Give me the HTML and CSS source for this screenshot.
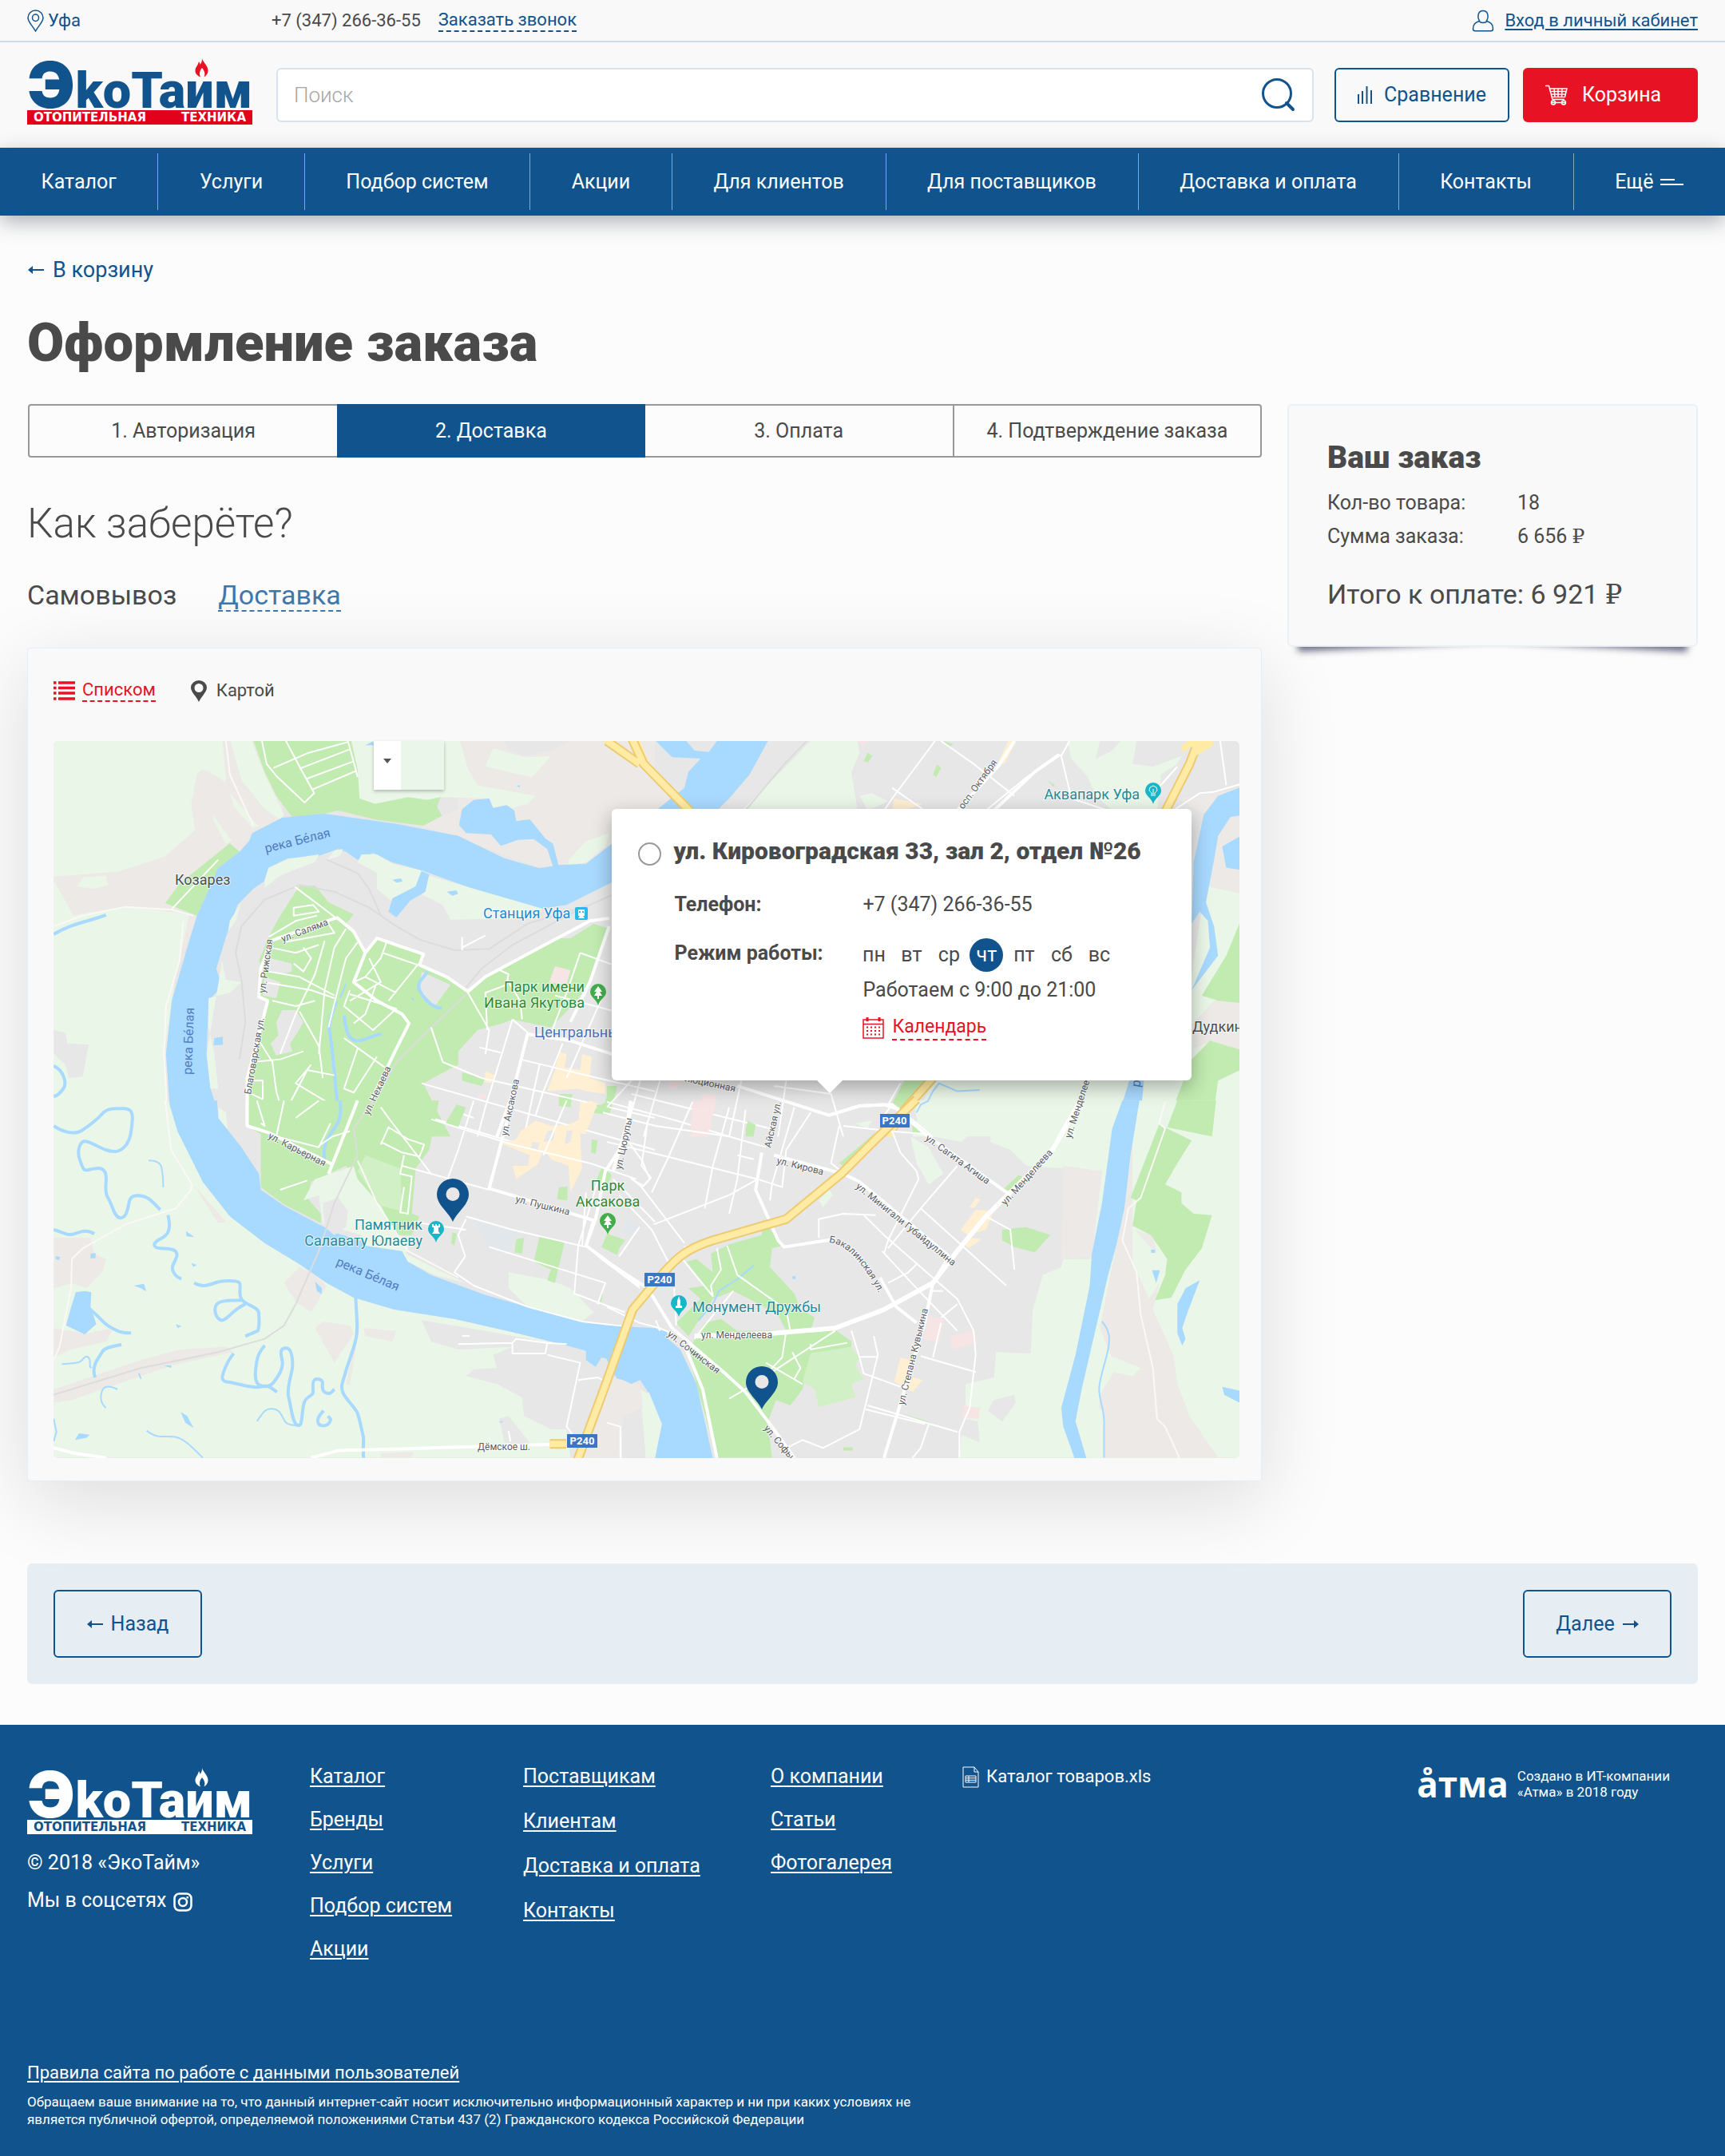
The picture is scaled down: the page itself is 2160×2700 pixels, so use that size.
FILE: index.html
```html
<!DOCTYPE html>
<html lang="ru">
<head>
<meta charset="utf-8">
<meta name="viewport" content="width=device-width, initial-scale=1">
<title>Оформление заказа — ЭкоТайм</title>
<link rel="stylesheet" href="styles.css">
</head>
<body>
<header class="header">
  <div class="topbar">
    <a class="topbar-city" href="#"><svg class="icon" width="21" height="28" viewBox="0 0 21 28"><path d="M10.500 27C7 20.500 1 15.500 1 10.200a9.500 9.200 0 0 1 19 0C20 15.500 14 20.500 10.500 27Z"/><ellipse cx="10.500" cy="10.200" rx="4" ry="4.200"/></svg>Уфа</a>
    <a class="topbar-phone" href="tel:+73472663655">+7 (347) 266-36-55</a>
    <a class="topbar-call dashed" href="#">Заказать звонок</a>
    <a class="topbar-login" href="#"><svg class="icon" width="28" height="28" viewBox="0 0 28 28"><path d="M10 14.500C7 11 6.500 1.500 14 1.500S21 11 18 14.500"/><path d="M9 14.500C4 16.500 1.500 18.500 1.500 24c0 2 .8 2.800 2.500 2.800h20c1.700 0 2.500-.8 2.500-2.800 0-5.500-2.500-7.500-7.500-9.500-2 2.800-8 2.800-10 0Z"/></svg><span>Вход в личный кабинет</span></a>
  </div>
  <div class="header-main">
    <a class="logo" href="#" aria-label="ЭкоТайм, отопительная техника">
      <span class="logo-name"><span class="logo-first">Э</span>kоТаим<svg class="logo-flame" width="20" height="24" viewBox="0 0 20 24"><path d="M11 0c1 5 8 10 7.500 16-.3 3.500-2.500 6-5 7.500 2-4 .5-8-2.500-11.500-3 3.500-4 7.500-2 11.500-3.500-1.500-6.500-4-6.500-8C2.500 11 6 9 7 4c1 1.500 1.500 2.500 1.500 4C10 6 11.300 3.500 11 0Z"/></svg></span>
      <span class="logo-tagline"><span>ОТОПИТЕЛЬНАЯ</span><span>ТЕХНИКА</span></span>
    </a>
    <form class="search">
      <input class="search-input" type="search" placeholder="Поиск" aria-label="Поиск">
      <button class="search-button" type="button" aria-label="Найти"><svg class="icon" width="42" height="42" viewBox="0 0 42 42"><circle cx="19" cy="19" r="17.500" stroke-width="3"/><path d="m31 31 8 8" stroke-width="4" stroke-linecap="round"/></svg></button>
    </form>
    <div class="header-buttons">
      <button class="button button-compare" type="button"><svg class="icon" width="20" height="22" viewBox="0 0 20 22"><path d="M2 10v12M7 6v16M12.500 0v22M18 5v17" stroke-width="2"/></svg>Сравнение</button>
      <button class="button button-cart" type="button"><svg class="icon" width="28" height="26" viewBox="0 0 28 26"><path d="M0 1.500h4.500L9 18.500h15M5.500 5H27l-2.500 10.500H8.500M7 8.500h19M7.500 12h18M11 5l1 10.500M16 5v10.500M21 5l-.5 10.500M8 22.500h17" stroke-width="1.500"/><circle cx="10" cy="22.500" r="2.500"/><circle cx="23" cy="22.500" r="2.500"/></svg>Корзина</button>
    </div>
  </div>
  <nav class="nav">
    <ul class="nav-list">
      <li><a href="#">Каталог</a></li>
      <li><a href="#">Услуги</a></li>
      <li><a href="#">Подбор систем</a></li>
      <li><a href="#">Акции</a></li>
      <li><a href="#">Для клиентов</a></li>
      <li><a href="#">Для поставщиков</a></li>
      <li><a href="#">Доставка и оплата</a></li>
      <li><a href="#">Контакты</a></li>
      <li><a href="#">Ещё <svg class="icon" width="29" height="10" viewBox="0 0 29 10"><path d="M0 2h18M0 8h29" stroke-width="2"/></svg></a></li>
    </ul>
  </nav>
</header>

<main class="page">
  <a class="back-link" href="#"><svg class="icon arrow" width="20" height="12" viewBox="0 0 20 12"><path d="M3 6h17" stroke-width="2"/><path class="solid" d="M0 6 6 1v10Z"/></svg>В корзину</a>
  <h1 class="title">Оформление заказа</h1>

  <div class="columns">
    <section class="checkout">
      <ol class="steps">
        <li>1. Авторизация</li>
        <li class="current" aria-current="step">2. Доставка</li>
        <li>3. Оплата</li>
        <li>4. Подтверждение заказа</li>
      </ol>
      <h2 class="question">Как заберёте?</h2>
      <div class="tabs">
        <button class="tab" type="button">Самовывоз</button>
        <button class="tab tab-link dashed" type="button">Доставка</button>
      </div>

      <div class="panel">
        <div class="views">
          <button class="view view-list" type="button"><svg class="icon" width="27" height="24" viewBox="0 0 27 24"><path d="M0 2h3.500M6 2h21M0 8.500h3.500M6 8.500h21M0 15h3.500M6 15h21M0 22h3.500M6 22h21" stroke-width="3.500"/></svg><span class="dashed">Списком</span></button>
          <button class="view" type="button"><svg class="icon" width="20" height="27" viewBox="0 0 20 27"><path class="solid" fill-rule="evenodd" d="M10 27C7 20 0 15 0 9a10 9 0 0 1 20 0c0 6-7 11-10 18ZM10 4a5.500 5.500 0 1 0 0 11 5.500 5.500 0 1 0 0-11Z"/></svg><span>Картой</span></button>
        </div>

        <div class="map">
          <svg class="map-canvas" viewBox="0 0 1485 898" role="img" aria-label="Карта Уфы с пунктами самовывоза">
            <rect class="urban" width="1485" height="898"/>

            <!-- north-west -->
            <g transform="translate(-7 -8) scale(.4847 .3333)">
              <path class="bare" d="M0 0H610L605 320 528 370 495 440 440 500 410 600 385 680 330 900 300 1500H0Z"/>
              <path class="field" d="M0 0H450L460 180 430 150 400 130 385 150 370 260 380 360 300 460 180 515 0 535ZM470 20H525L560 150 610 300 600 320 560 280 500 170ZM470 220 545 345 530 352 480 270ZM0 540 20 560 70 690 0 710ZM90 535 150 530 155 565 120 580 75 570ZM0 710 80 675 200 645 340 670 365 680 330 900 300 1200 310 1500H0ZM425 300 475 400 460 410 430 330Z"/>
              <path class="bare" d="M1040 0H1568V430L1400 500H1270L1040 380 960 340 1018 305 1060 280Z"/>
              <path class="urban" d="M1180 24H1350L1300 60 1230 80 1190 55ZM15 1110 45 1120 50 1160 105 1165 90 1285 55 1290 45 1240 15 1200Z"/>
              <path class="field" d="M780 0H1060L1085 130 1110 190 1260 230 1240 260 1190 280 1150 275 1140 240 1015 235 980 245 930 235 845 260 805 240ZM1500 240 1568 190V290H1460ZM1345 470 1390 400 1450 370 1440 420 1390 480 1345 490ZM1150 50 1230 85 1300 80 1250 160 1130 120Z"/>
              <path class="park" d="M525 0H780L800 130 805 240 845 260 930 235 980 245 1015 235 1005 270 1018 305 970 342 850 320 750 285 690 305 630 308 590 230 560 140ZM470 408 495 440 440 500 410 600 385 680 303 633 340 560Z"/>
              <path class="water" d="M1568 330 1457 410 1390 485 1320 490 1270 502 1180 465 1060 380 900 335 715 297 605 312 528 370 520 400 495 440 440 500 410 600 385 680 360 800 320 1000 305 1200 315 1400 335 1510H445L440 1420 420 1330 410 1200 415 1000 450 945 435 880 460 760 490 640 530 580 560 550 570 500 620 465 700 455 750 430 770 440 800 470 840 445 890 480 970 512 1080 570 1180 625 1270 655 1340 640 1457 555 1568 480Z"/>
              <path class="field" d="M560 545 570 500 620 467 700 450 690 480 650 500 600 530 560 575ZM722 470 740 435 762 430 755 455ZM810 450 850 450 890 485 970 512 960 580 900 640 850 580 850 520 800 480ZM985 530 1280 655 1240 690 1040 695 1020 640 965 600ZM500 630 485 700 465 740 470 700ZM450 850 460 920 500 930 470 970 415 990 415 1100 430 1200 440 1330 420 1330 410 1200ZM440 1400 460 1420 465 1500 440 1500Z"/>
              <path class="water" d="M965 512 985 525 975 590 935 625 900 687 880 665 890 615 950 570ZM1070 280 1100 245 1140 240 1150 275 1185 265 1205 285 1210 325 1245 318 1285 390 1305 410 1320 495H1305L1290 430 1255 392 1215 395 1170 418 1145 375 1080 370 1062 340ZM890 545 912 540 916 552 900 556ZM1030 590 1055 585 1060 598 1045 605ZM820 40 840 25 842 40ZM430 1140 452 1135 452 1165 428 1168ZM1210 192 1220 190 1218 198Z"/>
              <path class="park" d="M650 568H690L725 630 790 675 770 710 800 760 820 820 850 765 970 830 965 870 1060 935 1085 965 1160 880 1290 790 1320 765 1350 765 1410 710 1450 730 1400 930 1360 1010 1300 1100 1200 1070 1130 1110 1060 1240 970 1310 1000 1400 1040 1510H560L515 1470V1330L545 1160 565 1000 540 985 560 900 545 850 570 760 600 680Z"/>
              <path class="urban" d="M605 1035H640L660 1080 640 1130 625 1160 632 1190 590 1205 575 1160 595 1130 590 1080ZM575 840 630 860V890L600 900 560 880ZM560 910 600 930 590 990 555 980ZM965 890 1040 940 1000 1020 960 960ZM1200 1075 1300 1100 1280 1300 1060 1260 1060 1190 1110 1110ZM1030 1320 1060 1390 1050 1440 1080 1510H1040Z"/>
              <path class="clinic" d="M1310 870 1350 885 1340 940 1295 930ZM1110 1355 1130 1350 1130 1370 1110 1372Z"/>
              <path class="park" d="M1070 1270 1130 1290 1120 1320 1070 1300ZM1320 1350 1355 1350 1350 1400 1320 1395ZM1450 1320 1470 1330 1450 1430 1405 1420 1440 1380Z"/>
              <path class="centre" d="M1320 1190 1340 1200 1335 1250 1375 1260 1380 1200 1405 1210 1400 1290 1440 1310 1440 1350 1390 1340 1370 1330 1290 1340 1310 1260ZM1375 1380H1400L1390 1500H1250L1260 1450 1300 1470 1370 1460ZM1130 1265 1155 1280 1145 1310 1128 1305Z"/>
              <path class="stream wide" d="M745 1000C738 1040 722 1080 728 1120S742 1300 745 1350 755 1450 755 1510"/>
              <path class="stream wide" d="M765 1055C770 1110 775 1150 800 1150S830 1130 862 1125"/>
              <path class="stream wide" d="M980 890C975 910 950 930 960 960S990 1025 1018 1028"/>
              <path class="stream wide" d="M15 750C60 710 110 700 150 678M15 1245C40 1260 50 1310 40 1330S25 1355 15 1360"/>
              <path class="stream wide" d="M15 1470C40 1500 80 1495 100 1485S140 1440 160 1425 185 1400 200 1405 220 1410 220 1440V1510"/>
              <path class="stream" d="M770 935 755 990M940 990 945 998"/>
              <path class="rail" d="M495 1220 510 1080 500 920 485 820 500 720 560 620 650 565 740 590 830 650 900 720 960 770 1050 810 1140 805 1240 710 1400 640 1568 530M720 470 800 520 830 580 860 680M1080 950 1120 880 1200 790 1380 650M810 1510 840 1390 900 1230 990 1100 1085 970"/>
              <path class="road" d="M553 24 565 110 590 155 663 255 688 220 650 120 615 24M583 125 670 70 775 28M650 128 780 55M670 165 790 100M685 205 798 135M320 655 440 470M775 24 795 130 800 160"/>
              <path class="road" d="M638 572 700 640 745 690M635 650 685 640 700 665 635 680ZM570 760 640 700 695 680M610 780 740 745 720 700M575 800 640 820 700 790M660 800 680 840 660 890 635 860M715 775 690 900 640 1050 600 1200M770 730 740 800 715 960 700 1200M800 780 770 840 745 980 725 1100M570 890 650 910 740 980M560 930 680 960 740 990"/>
              <path class="road" d="M875 780 860 840 820 910 790 930M865 820 955 865 880 1000M820 910 900 970M830 840 860 930 780 1000M780 960 765 1020 840 1110 900 1030 780 975M850 930 820 1050 790 1085M545 1150 580 1230 590 1340 610 1440 600 1510M530 1230 600 1220 660 1190M650 1040 700 1170 710 1290M680 1240 640 1310 720 1380 710 1510M740 1280 670 1260 580 1510M765 1140 870 1250M800 1180 765 1330 790 1345 850 1210M525 1300H555V1370M525 1350 555 1370M580 1000 640 1020 690 1000"/>
              <path class="road" d="M1160 880 1190 900 1185 940 1130 970 1135 1110M1190 930 1220 1000 1225 1070M1375 820 1450 860 1568 910M1375 820 1340 970 1300 1120M1310 980 1568 1080M1085 970 1140 1110 1130 1200M990 1100 1020 1230 1120 1290 1568 1440M965 1310 1568 1560M1200 1070 1160 1260 1130 1400 1110 1510M1270 1240 1230 1510M1440 960 1340 1290M1220 1220 1420 1290 1568 1340M1240 1120 1200 1070M1115 1175 1170 1195M900 1380 930 1470 920 1510M1530 1300 1490 1510M1568 1240 1450 1200M1330 1160 1280 1340 1260 1430M1100 1440 1060 1420M990 1440 1200 1530M1070 760V810M1070 800 1130 755"/>
              <path class="road main" d="M575 780 550 880 545 985 568 1000 550 1100 515 1290V1465L570 1495M745 685 790 740 820 820 790 930 850 1000 915 1050 933 1085 900 1180 790 1510M820 820 850 765 970 825 960 865 1030 910 1085 965 1130 910 1270 800 1400 700 1450 690M1450 720 1400 930 1350 1080M1240 1120 1200 1350 1160 1510M1240 1125 1350 1150 1457 1200M575 775 745 688"/>
              <path class="road faint" d="M15 720 90 680 200 647 320 658 375 680M350 700 340 850 305 1020 300 1200 312 1500M460 24 470 150 530 340"/>
              <path class="highway" d="M1440 20 1530 95 1568 150M1520 20 1545 110 1568 160M1500 20C1500 55 1480 45 1475 24"/>
            </g>

            <!-- south-west -->
            <g transform="translate(-7 452) scale(.4847 .3333)">
              <path class="field" d="M0 0H312L335 110 400 300 470 430 560 530 650 610 720 680 790 735 895 780 1050 815 1200 865 1340 915 1390 935 1430 960V1337H0Z"/>
              <path class="bare" d="M15 510 110 510 120 570 150 590 140 640 100 700 60 680 15 700ZM15 850 100 870 170 850 150 900 60 930 15 960ZM15 1080 240 970 340 930 460 920 480 940 320 990 60 1120 15 1130ZM610 680 650 620 680 640 720 690 680 790 640 750ZM690 850 710 825 780 840 790 870 740 980ZM815 850 900 860 890 900 820 880ZM375 310 460 450 440 455ZM810 790 780 1065 770 1060ZM860 1320 945 1315 940 1337H860Z"/>
              <path class="urban" d="M965 820 1130 860 1340 915 1390 935 1500 960 1530 1080 1540 1337H1350L1340 1230 1300 1230 1230 1180 1225 1110 1160 1060 1080 1030 1100 1005 1160 1000 1150 950 1200 920 1060 930 990 900ZM1165 1190 1190 1180 1250 1290 1180 1280Z"/>
              <path class="water" d="M315-5 335 110 400 300 470 430 560 530 650 610 720 680 790 735 895 780 1050 815 1200 865 1340 915 1390 935V970L1415 995 1430 960 1460 970 1470 1045 1500 1060 1530 1045 1550 1090 1600 1100V860L1530 848 1380 825 1240 770 1130 725 990 650 930 600 915 560 860 545 750 495 700 460 610 390 550 330 545 270 500 170 440 60 437-5Z"/>
              <path class="park" d="M515-5H1010L985 180 950 250 940 420 960 430 940 500 900 500 800 290 770 240 680 300 670 360 705 420 705 455 610 385 550 320 550 100 515 90Z"/>
              <path class="park light" d="M820 200 910 250 915 410 860 390 800 260Z"/>
              <path class="field" d="M790 240 800 290 860 390 900 500 940 510 925 570 1020 640 1080 680 1000 650 930 600 915 560 820 540 810 500 710 460 700 350 660 370 690 290ZM1190 640 1300 670 1350 700 1410 790 1380 825 1240 770 1190 700ZM1530 1080 1568 1110V1337H1545Z"/>
              <path class="urban" d="M710 380 750 360 775 410 770 470 740 500 715 470Z"/>
              <path class="park" d="M1055 10 1080 20 1060 95 1025 85ZM1320 320 1342 318V370L1315 365ZM1210 515 1230 510 1225 570 1205 565ZM1270 505 1335 525 1310 680 1290 670 1300 630 1255 600ZM1045 490 1056 495 1050 540 1042 530ZM1430 250 1455 270 1440 310 1415 300ZM1445 495 1485 515 1470 575 1430 545ZM1405 140 1420 145 1415 195 1403 190ZM1320-5H1345L1330 20ZM1410 10H1450L1445 50ZM1435 700 1430 750 1424 748Z"/>
              <path class="centre" d="M1240 90 1260 70 1300 100 1340 90 1380 60 1375 20 1400-5 1420 5 1395 100 1375 120 1380 250 1350 340 1345 240 1300 215 1280 180 1265 235 1210 290 1200 240 1240 240 1245 200 1170 155 1210 140 1220 110Z"/>
              <path class="urban" d="M1290 110 1310 105 1305 145 1280 150ZM1250 150 1270 155 1265 180 1248 175ZM1340 110 1355 105 1350 150 1335 160Z"/>
              <path class="plot" d="M1100 440 1220 480 1190 570 1140 550ZM1500 440 1530 470 1500 500 1480 480Z"/>
              <path class="water" d="M95 710 112 715 110 770 125 835 95 873 47 840 60 770 72 715ZM690 675 708 700 707 722 695 710ZM357 485 378 508 358 505ZM222 690 248 683 254 712 240 700ZM80 1245 108 1250 100 1262 70 1270ZM370 605 384 612 376 620ZM330 835 345 842 335 850ZM343 1165 360 1180 376 1225 355 1205ZM110 570 123 568V587H110ZM20 580 32 582 28 594 20 590ZM300 990 320 990 318 1000ZM1164 1200 1176 1199 1172 1206Z"/>
              <path class="stream wide" d="M755-5C760 60 750 80 735 110S710 160 715 220M795 735C797 790 800 830 798 870S780 960 770 1010 755 1070 763 1095 795 1150 800 1170 812 1240 815 1260V1337"/>
              <path class="stream wide" d="M15 90C40 115 70 125 90 105S125 70 140 45 175 25 195 25 220 40 218 70 215 140 200 165 170 190 150 180 100 140 90 150 75 190 83 220 90 260 105 255 140 240 148 265 142 330 155 360 170 430 185 435 205 410 208 390 210 350 235 352 270 375 290 405M310 425C320 480 310 500 290 515S270 548 290 550 330 550 333 570 318 610 322 630 335 660 345 665M15 480C40 490 50 505 70 495S100 480 120 495M378 680C400 700 420 685 435 678S490 668 495 680 490 725 502 745 545 770 545 795 548 840 542 860L510 880M500 745C470 745 440 745 434 765S435 815 448 820 480 775 510 760M105 775C130 800 140 830 160 845S185 868 215 868M190 912C160 920 145 925 140 940S110 990 122 1035"/>
              <path class="stream wide" d="M560 915C540 950 540 970 538 990S532 1050 545 1062 575 1070 585 1050 610 1000 605 970 600 925 615 925 632 960 632 990 615 1070 622 1110 632 1210 645 1215 655 1180 660 1140 685 1110 685 1090 680 1035 700 1042 700 1075 715 1090 735 1085 740 1080M480 945C465 970 460 990 455 1010S445 1050 465 1052 530 1080 550 1070 580 1080 592 1090M712 1160C700 1180 695 1190 698 1205S720 1220 727 1205 728 1190 724 1180"/>
              <path class="stream" d="M260 220C280 220 292 230 294 250S298 280 298 320M36 985C60 980 80 985 88 970S105 950 108 970 105 990 112 1000M180 1080C160 1065 145 1065 140 1085S135 1130 150 1150M255 1235C280 1265 300 1255 325 1258S375 1300 400 1337M540 1200C555 1170 560 1150 580 1153S605 1180 610 1195 625 1215 640 1215M235 1020 240 1040M15 1190 22 1240 15 1275"/>
              <path class="rail" d="M15 1100 240 1000 440 940 560 890 610 840 640 760 700 560 740 380 800 200 790 100 840-5"/>
              <path class="road" d="M860 20 880 60 990 270M860 160 880 95 930 140 972 160 960 205 915 190 860 150M920 200 910 270 940 280 930 420 910 415 920 320M600 330 670 295M700 165 735 130 780 110M990 65 1200 160 1400 230 1520 290M915 240 1140 330M1080 430 1200 480 1390 545M1080 440 1060 500 1078 580 1050 640 1100 690 1240 770 1380 825 1500 845M1140 545 1440 680 1420 760M1100-5 1060 180 1030 300M1420 300 1370 540 1360 720 1490 790M1390 340 1380 545M1395 545 1430 590 1530 700M1340-5 1280 200M1460 290 1568 450M1500 150 1535 220 1555 290 1535 320 1505 285M940 450 1080 480M540-5 560 90 550 80M610-5 590 130 700 170 730 80M700-5 640 60"/>
              <path class="road main" d="M515-5V90L570 115 735 235 800-5M735 235 725 270M1200-5 1140 325 1210 355 1410 445 1390 540 1530 690M1505-5 1490 150 1440 260 1415 440 1390 540M15 1300 70 1320 150 1337M680 1337 750 1310 1110 1295 1340 1285"/>
              <path class="road" d="M1060 910 1200 905 1210 890 1290 905 1285 945 1200 945V905M1290 905 1340 910M1290 950 1375 980 1340 1220 1360 1260M1370 1045 1420 1035 1480 1080V1337M1420 1205 1480 1220M1190 1237 1195 1275M1070 878 1090 880"/>
              <path class="road faint" d="M303-5 318 180 372 310 370 330 330 400 200 460 90 550 62 590 60 700 30 920 15 970M800 220 850 380 930 560 1060 660"/>
            </g>

            <!-- north-east -->
            <g transform="translate(693 -8) scale(.5102 .3333)">
              <path class="bare" d="M0 24H60L190 285H0Z"/>
              <path class="field" d="M500 24H615L620 70 600 140 615 285H330L400 180ZM1130 24H1210L1200 90 1240 60 1260 24H1300L1290 110 1340 120 1410 80 1400 110 1360 150 1350 285H1240L1200 230 1180 160 1140 90ZM620 230 650 220 690 250 640 285ZM1470 560 1568 600V1510H1180L1430 950Z"/>
              <path class="field" d="M800 1300H1435L1420 1510H750L770 1400Z"/>
              <path class="bare" d="M1400 240 1568 200V600L1470 570V300ZM1490 1000H1568V1190L1480 1155 1440 1180 1435 1090Z"/>
              <path class="park" d="M630 100 640 68 652 80 640 105ZM800 150 810 112 820 125 808 160ZM1080 170 1100 190 1095 195ZM1568 650 1520 830 1460 980 1500 1000 1568 1010ZM1480 1150 1568 1190V1250L1500 1300 1480 1510H1365L1390 1400 1435 1220ZM730 1300H800L730 1410 700 1385ZM825 24 850 35 840 45ZM0 1320 25 1320 10 1370 0 1360ZM345 1450 365 1465 360 1510H340Z"/>
              <path class="clinic" d="M612 24H645L628 40ZM235 1350 268 1355 250 1510H205ZM155 1300H180L170 1335 150 1330Z"/>
              <path class="centre" d="M985 24H1005L975 110 960 105ZM705 240 775 260 740 280 700 285Z"/>
              <path class="water" d="M120 24H395L350 150 300 240 270 285H120L190 200 200 140 230 90 160 85ZM1568 190 1500 230 1465 300 1440 480 1435 710 1455 665 1475 700 1480 800 1435 960 1500 830 1490 720 1470 630 1490 470 1500 380 1530 310 1568 300ZM1568 370 1510 420 1520 500 1568 510ZM1282 1300H1318L1305 1510H1240Z"/>
              <path class="urban" d="M195 24H270L250 65 215 60Z"/>
              <path class="stream" d="M780 1400 800 1340 815 1310 860 1340 915 1335"/>
              <path class="rail" d="M490 24 430 120 340 285"/>
              <path class="road" d="M805 24 700 240 680 285M820 24 900 110 1000 230M700 200 775 280M1115 75 1030 160 930 285M1135 24 1115 80 1140 240 1230 285M1330 240 1400 120M1505 24 1520 190M1390 285 1455 220 1490 215 1568 180M0 1400 60 1300M130 1300 90 1510M440 1300 420 1510M330 1300 300 1510M0 1380 170 1450 300 1510M60 1350 400 1480M410 1320 550 1350 580 1510M690 1390 720 1310M720 1410 800 1510M700 1390 670 1450"/>
              <path class="road main" d="M1000 24 960 120 850 300M1110 75 1050 140 950 285M320 1320 545 1430 620 1395 680 1390 720 1410"/>
              <path class="highway-edge" d="M60 10 90 110 205 290M0 24 80 110M1455 10 1430 110 1370 290M800 1290 730 1410 700 1480"/>
              <path class="highway" d="M60 10 90 110 205 290M0 24 80 110M1455 10 1430 110 1370 290M1420 60C1410 30 1450 30 1480 35L1440 70M800 1290 730 1410 690 1510"/>
            </g>

            <!-- south-east -->
            <g transform="translate(693 452) scale(.5102 .3333)">
              <path class="field" d="M755-5H1568V1337H865L870 1250 915 1280 910 1200 880 1190 880 1060 950 1035 955 940 1040 945 1045 780 1070 650 1115 620 1120 590H1185L1215 260 1030 240 990 180 940 150 945 110 915 85 870 150 800 130 760 60ZM610 80 650 70 640 100ZM745 130 790 170 825 270 790 310 760 230ZM545 330 555 350 530 395 520 370Z"/>
              <path class="bare" d="M1120 240 1215 260 1190 585 1115 590ZM1290 120V480L1340 500 1360 650 1340 780 1390 950 1400 1060 1430 1180 1500 1337H1200L1210 1100 1250 1000 1210 850 1235 650 1270 400ZM0 1030 80 1060 90 1150 40 1180 30 1337H-70Z"/>
              <path class="field" d="M1290 470 1360 590 1370 650 1330 740 1290 600ZM1230 950 1310 1000 1290 1030 1230 1010ZM1180 1130 1220 1160V1337H1177ZM85 1090 130 1100 135 1210 118 1337H95Z"/>
              <path class="urban" d="M950 1120 1000 1100 1003 1130 970 1200 935 1160Z"/>
              <path class="park" d="M1355 85 1435 145 1400 230 1370 310 1410 340V380L1440 420 1485 425 1460 550 1420 630 1385 735 1345 745 1370 650 1375 590 1335 500 1290 465 1300 370 1285 360ZM1400-5H1495L1485 130 1375 95ZM970 480 1030 470 1088 500 1050 565 1000 545 970 520ZM1010 275 1025 285 990 340 975 325ZM345 75 365 85 358 117 340 110ZM750 75 785 125 750 115ZM715 1165 795 1205 790 1208ZM580 1298H603V1310H580ZM0 500 45 520 20 570 0 545ZM0 265 12 275 0 320Z"/>
              <path class="park" d="M300 535 380 500 385 440 410 500 430 540 405 550 400 620 460 720 475 780 510 810 500 860H440L420 800 350 740 310 710 260 740 200 880 170 830 230 740 200 700 240 690 195 600 220 590 260 640 255 570ZM215 890 240 830 280 815 320 860 560 855 600 900V920L500 945 480 1080 450 1140 415 1120 395 1200 400 1270 405 1337H270L200 950ZM640 140 660 110 590 250 570 230Z"/>
              <path class="park light" d="M500 945 600 920 620 960 610 990 630 1040 600 1060 610 1110 520 1145 510 1080 480 1050Z"/>
              <path class="clinic" d="M790 805 828 815 815 905 775 890ZM845 880 900 855 898 910 845 930ZM875 1140 915 1150 912 1190 872 1188ZM210-5H270L245 133 205 110Z"/>
              <path class="centre" d="M905 360 918 365 900 400 890 395ZM905 405 950 410 930 480 885 500 868 480ZM890 510 920 515 890 548 880 540ZM720 960 745 970 740 1030 775 1045 750 1090 705 1050Z"/>
              <path class="water" d="M1265-5 1240 100 1215 380 1190 570 1185 690 1150 950 1115 1150 1120 1220 1148 1340H1177L1150 1200 1165 1080 1200 850 1230 650 1250 540 1270 400 1285 200 1307-5ZM-10 840 120 850 180 930 220 1060 260 1340H118L135 1210 95 1060 85 1040 60 1060 20 1030 0 970ZM1455 670 1425 790 1412 850 1420 890 1412 915 1400 870 1400 760 1420 700ZM1510 1070 1553 1085V1130L1515 1100ZM1338 632H1357L1348 680ZM1335 555H1345V567H1336ZM455 655H463V665H456Z"/>
              <path class="stream" d="M760 40 770 10 790-5M360 615 325 660 275 710 260 760 225 820M1215 825C1235 860 1235 890 1230 930S1208 1040 1208 1080 1220 1150 1220 1200V1337"/>
              <path class="road" d="M-10 40 120 90 300 130M0 150 160 210 370 290M100 70 85 240 108 285 90 315 60 290M210 0 150 210 110 340M300 20 260 240 240 400M340 30 320 290 300 420M460 20 405 310 400 370M300 130 390 170M320 200 360 215M370 290 300 350 115 460M500 40 440 180 430 320 370 290M570 90 550 230 575 260M700 110 720 190 760 260 765 290 690 520 680 570M580 90 700 110 780 120M860 240 770 400 690 550M675 560 760 700 860 860M520 510V440L580 420 660 425M630 425 680 500 770 620 860 740 900 860 905 950 890 1150 865 1240V1337M770 400 850 510 980 690M690 680 740 640 760 610M930 430 990 480 1000 630"/>
              <path class="road" d="M180 580 260 730 255 690 280 630 270 550M295 540 320 650 440 780 450 860M310 710 240 840M440 860 430 960 380 1040 560 860M390 980 480 1060M455 940 475 1000 460 1040M500 910V930L590 905M600 860 620 960 630 1020 720 1070M655 880 665 950 620 1230 530 1300 480 1270 440 1300M620 958H665M640 1140 860 1240M635 1155 780 1210M790 1210 770 1300 750 1337M770 955 905 1015M820 830 800 960M860 760 820 810M800 710H825M300 1115 350 1070M0 600 90 690M30 350 110 480 150 600M80 310 190 530M80 470 30 580M0 770 80 830 130 850 160 870M120 820 130 860M165 700 170 840M240 840 215 890M0 1205 33 1220V1337"/>
              <path class="road main" d="M-10 590 100 700 160 850 290 1020 340 1090 400 1210 460 1337M380 190 365 330 400 450 420 520 435 545 560 515M670 660 710 770 760 830M545 50 620 15 700 10 780 120M410 200 580 270 620 300 840 580M840 580 800 680 780 830 680 1337M780 120 990 350M195 930 235 1080 270 1337M440 430 280 500 190 550M65 0 15 260"/>
              <path class="road avenue" d="M215 880 400 870 560 850 680 780 800 680 860 560 930 430 1090 190 1160 0"/>
              <path class="road faint" d="M1370 0 1355 80 1370 100 1310 360 1280 400 1265 520 1300 640 1310 800 1340 1000 1350 1190 1370 1220 1405 1337"/>
              <path class="highway-edge" d="M760-10 640 170 575 270 440 440 260 520C190 555 170 590 140 640L63 780-10 1090-72 1345M-140 1285H-100"/>
              <path class="highway" d="M760-10 640 170 575 270 440 440 260 520C190 555 170 590 140 640L63 780-10 1090-72 1345M-140 1285H-70"/>
            </g>

            <g class="street">
              <text transform="translate(287 252) rotate(-21)">ул. Саляма</text>
              <text transform="translate(265 316) rotate(-82)">ул. Рижская</text>
              <text transform="translate(247 443) rotate(-80)">Благоварская ул.</text>
              <text transform="translate(395 469) rotate(-65)">ул. Нехаева</text>
              <text transform="translate(568 495) rotate(-78)">ул. Аксакова</text>
              <text transform="translate(268 497) rotate(27)">ул. Карьерная</text>
              <text transform="translate(578 577) rotate(14)">ул. Пушкина</text>
              <text transform="translate(711 537) rotate(-78)">ул. Цюрупы</text>
              <text x="531" y="888">Дёмское ш.</text>
              <text x="811" y="748">ул. Менделеева</text>
              <text transform="translate(768 744) rotate(38)">ул. Сочинская</text>
              <text transform="translate(889 861) rotate(50)">ул. Софьи П</text>
              <text transform="translate(1065 832) rotate(-76)">ул. Степана Кувыкина</text>
              <path id="bakalinskaya" class="guide" d="M971 628Q1003 630 1038 700"/>
              <text><textPath href="#bakalinskaya">Бакалинская ул.</textPath></text>
              <text transform="translate(1004 559) rotate(39)">ул. Минигали Губайдуллина</text>
              <text transform="translate(1091 499) rotate(36)">ул. Сагита Агиша</text>
              <text transform="translate(905 529) rotate(14)">ул. Кирова</text>
              <text transform="translate(898 510) rotate(-77)">Айская ул.</text>
              <text transform="translate(1192 582) rotate(-48)">ул. Менделеева</text>
              <text transform="translate(1274 498) rotate(-72)">ул. Менделеев</text>
              <text transform="translate(790 426) rotate(12)">люционная</text>
              <text transform="translate(1139 86) rotate(-54)">осп. Октября</text>
            </g>
            <g class="river">
              <text transform="translate(266 140) rotate(-14)">река Бе́лая</text>
              <text transform="translate(173 418) rotate(-88)">река Бе́лая</text>
              <text transform="translate(353 656) rotate(23)">река Бе́лая</text>
              <text transform="translate(1360 434) rotate(-80)">р</text>
            </g>
            <g class="place">
              <text x="152" y="180">Козарез</text>
              <text x="1426" y="364">Дудкин</text>
              <text class="station" x="538" y="222">Станция Уфа</text>
              <text class="centre-name" x="602" y="371">Центральнь</text>
              <g class="park-name">
                <text x="665" y="314" text-anchor="end">Парк имени</text>
                <text x="665" y="334" text-anchor="end">Ивана Якутова</text>
                <text x="694" y="563" text-anchor="middle">Парк</text>
                <text x="694" y="583" text-anchor="middle">Аксакова</text>
              </g>
              <g class="sight-name">
                <text x="462" y="612" text-anchor="end">Памятник</text>
                <text x="462" y="632" text-anchor="end">Салавату Юлаеву</text>
                <text x="800" y="715">Монумент Дружбы</text>
                <text x="1360" y="73" text-anchor="end">Аквапарк Уфа</text>
              </g>
            </g>
            <g class="poi">
              <path class="poi-park" d="M682 331c-2-8-10-10-10-17a10 10 0 0 1 20 0c0 7-8 9-10 17ZM694 618c-2-8-10-10-10-17a10 10 0 0 1 20 0c0 7-8 9-10 17Z"/>
              <path class="poi-glyph" d="m682 307 5 7h-3l3 5h-4v4h-2v-4h-4l3-5h-3ZM694 594l5 7h-3l3 5h-4v4h-2v-4h-4l3-5h-3Z"/>
              <path class="poi-sight" d="M479 628c-2-8-10-10-10-17a10 10 0 0 1 20 0c0 7-8 9-10 17ZM783 721c-2-8-10-10-10-17a10 10 0 0 1 20 0c0 7-8 9-10 17ZM1377 79c-2-8-10-10-10-17a10 10 0 0 1 20 0c0 7-8 9-10 17Z"/>
              <path class="poi-glyph" d="M474 605h2v2h2v-2h2v2h2v-2h2v4h-2v5l2 3h-10l2-3v-5h-2ZM781 701l2-6 2 6v6h2v3h-8v-3h2Z"/>
              <path class="poi-ring" d="M1375 69v-4l-3-3 1-4 4-2 4 2 1 4-3 3v4M1377 60v9"/>
              <rect class="poi-station" x="653" y="208" width="16" height="16" rx="2"/>
              <path class="poi-glyph" d="M657 211h8v8h-2l2 3h-8l2-3h-2Z"/>
              <path class="poi-station" d="M658 213h2v2h-2ZM662 213h2v2h-2Z"/>
            </g>
            <g class="shield">
              <rect x="1035" y="467" width="37" height="17"/><text x="1053" y="480">P240</text>
              <rect x="740" y="666" width="38" height="17"/><text x="759" y="679">P240</text>
              <rect x="643" y="868" width="38" height="17"/><text x="662" y="881">P240</text>
            </g>
          </svg>

          <button class="map-select" type="button" aria-label="Выбрать слой"><span class="map-select-arrow"><svg width="10" height="6" viewBox="0 0 10 6"><path d="M0 0h10L5 6Z"/></svg></span></button>
          <button class="pin pin-west" type="button" aria-label="Пункт у памятника Салавату Юлаеву"><svg width="40" height="54" viewBox="0 0 40 54"><path d="M20 54C15 42 0 33 0 20a20 20 0 0 1 40 0c0 13-15 22-20 34Z"/><circle class="pin-dot" cx="20" cy="19.500" r="8.500"/></svg></button>
          <button class="pin pin-south" type="button" aria-label="Пункт на Сочинской улице"><svg width="40" height="54" viewBox="0 0 40 54"><path d="M20 54C15 42 0 33 0 20a20 20 0 0 1 40 0c0 13-15 22-20 34Z"/><circle class="pin-dot" cx="20" cy="19.500" r="8.500"/></svg></button>

          <div class="popup">
            <label class="popup-title"><input class="popup-radio" type="radio" name="pickup">ул. Кировоградская 33, зал 2, отдел №26</label>
            <dl class="popup-details">
              <dt>Телефон:</dt>
              <dd>+7 (347) 266-36-55</dd>
              <dt>Режим работы:</dt>
              <dd>
                <ul class="days"><li>пн</li><li>вт</li><li>ср</li><li class="today">чт</li><li>пт</li><li>сб</li><li>вс</li></ul>
                <p class="hours">Работаем с 9:00 до 21:00</p>
                <a class="calendar" href="#"><svg class="icon" width="27" height="27" viewBox="0 0 27 27"><path d="M1 3h25v23H1ZM1 8.500h25" stroke-width="1.500"/><path d="M6 0v5M21 0v5" stroke-width="3"/><path d="M5 12.500h18M5 17h18M5 21.500h18" stroke-width="2" stroke-dasharray="2 3"/></svg><span class="dashed">Календарь</span></a>
              </dd>
            </dl>
          </div>
        </div>
      </div>
    </section>

    <aside class="order-wrap">
      <section class="order">
        <h2 class="order-title">Ваш заказ</h2>
        <dl class="order-list">
          <dt>Кол-во товара:</dt><dd>18</dd>
          <dt>Сумма заказа:</dt><dd>6 656 <span class="rouble">₽</span></dd>
        </dl>
        <p class="order-total">Итого к оплате: 6 921 <span class="rouble">₽</span></p>
      </section>
    </aside>
  </div>

  <div class="actions">
    <button class="button button-step" type="button"><svg class="icon arrow" width="20" height="12" viewBox="0 0 20 12"><path d="M3 6h17" stroke-width="2"/><path class="solid" d="M0 6 6 1v10Z"/></svg>Назад</button>
    <button class="button button-step" type="button">Далее<svg class="icon arrow" width="20" height="12" viewBox="0 0 20 12"><path d="M0 6h17" stroke-width="2"/><path class="solid" d="M20 6 14 1v10Z"/></svg></button>
  </div>
</main>

<footer class="footer">
  <div class="footer-grid">
    <div>
      <a class="logo logo-white" href="#" aria-label="ЭкоТайм, отопительная техника">
        <span class="logo-name"><span class="logo-first">Э</span>kоТаим<svg class="logo-flame" width="20" height="24" viewBox="0 0 20 24"><path d="M11 0c1 5 8 10 7.500 16-.3 3.500-2.500 6-5 7.500 2-4 .5-8-2.500-11.500-3 3.500-4 7.500-2 11.500-3.500-1.500-6.500-4-6.500-8C2.500 11 6 9 7 4c1 1.500 1.500 2.500 1.500 4C10 6 11.300 3.500 11 0Z"/></svg></span>
        <span class="logo-tagline"><span>ОТОПИТЕЛЬНАЯ</span><span>ТЕХНИКА</span></span>
      </a>
      <p class="copyright">© 2018 «ЭкоТайм»</p>
      <p class="social">Мы в соцсетях <a href="#" aria-label="Instagram"><svg class="icon" width="24" height="24" viewBox="0 0 24 24"><rect x="1.500" y="1.500" width="21" height="21" rx="6" stroke-width="2.500"/><circle cx="12" cy="12" r="5" stroke-width="2.500"/><path class="solid" d="M16.500 5h2.500v2.500h-2.500Z"/></svg></a></p>
    </div>
    <ul class="footer-links">
      <li><a href="#">Каталог</a></li>
      <li><a href="#">Бренды</a></li>
      <li><a href="#">Услуги</a></li>
      <li><a href="#">Подбор систем</a></li>
      <li><a href="#">Акции</a></li>
    </ul>
    <ul class="footer-links footer-links-loose">
      <li><a href="#">Поставщикам</a></li>
      <li><a href="#">Клиентам</a></li>
      <li><a href="#">Доставка и оплата</a></li>
      <li><a href="#">Контакты</a></li>
    </ul>
    <ul class="footer-links">
      <li><a href="#">О компании</a></li>
      <li><a href="#">Статьи</a></li>
      <li><a href="#">Фотогалерея</a></li>
    </ul>
    <a class="download" href="#"><svg class="icon" width="21" height="27" viewBox="0 0 21 27"><path d="M1 1h14l5 6v19H1ZM15 1v6h5M4 12h13v8H4ZM4 14.700h13M4 17.300h13M8 12v8" stroke-width="1"/></svg>Каталог товаров.xls</a>
    <a class="author" href="#"><span class="author-logo">åтма</span><span>Создано в ИТ-компании<br>«Атма» в 2018 году</span></a>
  </div>
  <div class="legal">
    <a class="legal-link" href="#">Правила сайта по работе с данными пользователей</a>
    <p class="legal-note">Обращаем ваше внимание на то, что данный интернет-сайт носит исключительно информационный характер и ни при каких условиях не является публичной офертой, определяемой положениями Статьи 437 (2) Гражданского кодекса Российской Федерации</p>
  </div>
</footer>
</body>
</html>
```
FILE: styles.css
```css
:root {
  --blue: #11538c;
  --red: #e71324;
  --text: #4a4a4a;
  --line: #d8e3ec;
  --surface: #f9f9f9;
  --gutter: 34px;
}

*,
*::before,
*::after {
  box-sizing: border-box;
}

body {
  margin: 0;
  background: #fcfcfc;
  color: var(--text);
  font: 400 25px/32px Roboto, "Noto Sans", sans-serif;
}

h1, h2, p, ul, ol, dl, dd {
  margin: 0;
  padding: 0;
}

ul, ol {
  list-style: none;
}

a {
  color: var(--blue);
}

button, input {
  font: inherit;
  color: inherit;
}

button {
  padding: 0;
  border: 0;
  background: none;
  cursor: pointer;
}

.icon {
  flex: none;
  fill: none;
  stroke: currentColor;
  stroke-width: 1.5;
}

.icon .solid {
  fill: currentColor;
  stroke: none;
}

.dashed {
  border-bottom: 2px dashed currentColor;
  text-decoration: none;
}

/* Header */

.header {
  position: relative;
  background: var(--surface);
}

.topbar {
  display: flex;
  align-items: center;
  height: 53px;
  padding: 0 var(--gutter);
  border-bottom: 2px solid #cddceb;
  font-size: 22px;
  line-height: 26px;
}

.topbar-city {
  display: flex;
  align-items: center;
  gap: 5px;
  width: 306px;
  text-decoration: none;
}

.topbar-phone {
  color: var(--text);
  text-decoration: none;
}

.topbar-call {
  margin-left: 22px;
}

.topbar-login {
  display: flex;
  align-items: center;
  gap: 13px;
  margin-left: auto;
  text-decoration: none;
}

.topbar-login span {
  text-decoration: underline;
  text-decoration-thickness: 2px;
  text-underline-offset: 3px;
}

.header-main {
  display: flex;
  align-items: center;
  height: 132px;
  padding: 0 var(--gutter);
}

.logo {
  position: relative;
  display: block;
  width: 282px;
  color: var(--blue);
  text-decoration: none;
}

.header-main .logo {
  align-self: flex-start;
  margin-top: 20px;
}

.logo-name {
  display: flex;
  align-items: baseline;
  justify-content: space-between;
  height: 65px;
  font-weight: 900;
  font-size: 63px;
  line-height: 66px;
}

.logo-first {
  font-family: Inter, sans-serif;
  font-size: 80px;
}

.logo-flame {
  position: absolute;
  top: 0;
  left: 208px;
  fill: var(--red);
}

.logo-tagline {
  display: flex;
  justify-content: space-between;
  padding: 0 8px;
  background: #e3001b;
  color: #fff;
  font: 700 15px/18px "DejaVu Sans", sans-serif;
}

.logo-white .logo-flame {
  fill: #fff;
}

.logo-white .logo-tagline {
  background: #fff;
  color: var(--blue);
}

.search {
  display: flex;
  flex: 1;
  height: 68px;
  margin: 0 26px 0 30px;
  border: 2px solid var(--line);
  border-radius: 6px;
  background: #fff;
}

.search-input {
  flex: 1;
  min-width: 0;
  padding: 0 20px;
  border: 0;
  outline: 0;
  background: none;
  font-size: 26px;
}

.search-input::placeholder {
  color: #a5a5a5;
  font-weight: 300;
  opacity: 1;
}

.search-button {
  display: flex;
  align-items: center;
  padding-right: 21px;
  color: var(--blue);
}

.header-buttons {
  display: flex;
  gap: 17px;
}

.button {
  display: flex;
  align-items: center;
  justify-content: center;
  width: 219px;
  height: 68px;
  border: 2px solid var(--blue);
  border-radius: 6px;
  color: var(--blue);
}

.button-compare,
.button-cart {
  justify-content: flex-start;
  gap: 14px;
  padding-left: 26px;
}

.button-cart {
  gap: 18px;
  border-color: var(--red);
  background: var(--red);
  color: #fff;
}

.nav {
  background: var(--blue);
  box-shadow: 0 8px 24px rgba(30, 40, 55, .35);
}

.nav-list {
  display: flex;
  padding: 7px 0;
}

.nav-list li {
  flex: auto;
  border-left: 1px solid rgba(255, 255, 255, .5);
}

.nav-list li:first-child {
  border-left: 0;
}

.nav-list a {
  display: flex;
  align-items: center;
  justify-content: center;
  gap: 9px;
  height: 71px;
  color: #fff;
  text-decoration: none;
}

/* Page */

.page {
  padding: 50px var(--gutter) 51px;
}

.back-link {
  display: inline-flex;
  align-items: center;
  gap: 11px;
  height: 32px;
  padding-left: 1px;
  text-decoration: none;
  font-size: 27px;
}

.title {
  margin: 37px 0 39px;
  font-weight: 900;
  font-size: 67px;
  line-height: 76px;
}

.columns {
  display: grid;
  grid-template-columns: minmax(0, 1fr) 514px;
  align-items: start;
  gap: 32px;
}

.steps {
  display: grid;
  grid-template-columns: repeat(4, 1fr);
  margin-left: 1px;
  border: 2px solid #999;
  border-radius: 4px;
}

.steps li {
  height: 63px;
  line-height: 63px;
  text-align: center;
}

.steps li:last-child {
  border-left: 2px solid #999;
}

.steps .current {
  height: 67px;
  margin: -2px 0;
  background: var(--blue);
  color: #fff;
  line-height: 67px;
}

.question {
  margin-top: 53px;
  font-weight: 300;
  font-size: 51px;
  line-height: 60px;
}

.tabs {
  display: flex;
  align-items: flex-start;
  gap: 52px;
  margin-top: 40px;
  font-size: 34px;
  line-height: 38px;
}

.tab-link {
  color: #3f77ab;
}

.panel {
  margin-top: 45px;
  padding: 39px 27px 28px 32px;
  border: 1px solid #e6edf3;
  border-radius: 4px;
  background: var(--surface);
  box-shadow: 0 24px 100px rgba(0, 0, 0, .13);
}

.views {
  display: flex;
  gap: 44px;
  font-size: 22px;
  line-height: 26px;
}

.view {
  display: flex;
  align-items: center;
  gap: 12px;
  height: 28px;
}

.view-list {
  gap: 9px;
  color: var(--red);
}

/* Map */

.map {
  position: relative;
  margin-top: 49px;
}

.map-canvas {
  display: block;
  width: 100%;
  height: auto;
  border-radius: 6px;
}

.map-canvas path {
  vector-effect: non-scaling-stroke;
}

.urban { fill: #e7e7e7; }
.bare { fill: #ece9e6; }
.field { fill: #eaf6e8; }
.park { fill: #c1ebb0; }
.park.light { fill: #d2f0c6; }
.water { fill: #a8d9ff; }
.clinic { fill: #f7e4e5; }
.centre { fill: #ffefd3; }
.plot { fill: #e2e7eb; }

.stream,
.rail,
.road,
.highway,
.highway-edge,
.guide {
  fill: none;
  stroke-linejoin: round;
}

.stream { stroke: #a8d9ff; stroke-width: 2px; }
.stream.wide { stroke-width: 4px; }
.rail { stroke: #dcdcdc; stroke-width: 2px; }
.road { stroke: #fff; stroke-width: 2px; }
.road.main { stroke-width: 4px; }
.road.avenue { stroke-width: 6px; }
.road.faint { stroke: #fbf8f6; }
.highway-edge { stroke: #edcb72; stroke-width: 12px; }
.highway { stroke: #ffeba3; stroke-width: 8px; }

.map-canvas text {
  paint-order: stroke;
  stroke: rgba(255, 255, 255, .7);
  stroke-width: 2px;
}

.street {
  fill: #5c6066;
  font-size: 12px;
}

.river {
  fill: #527cc0;
  font-size: 16px;
}

.map-canvas .river text {
  stroke: none;
}

.place {
  fill: #4b4f55;
  font-size: 18px;
}

.station { fill: #218bd0; }
.centre-name { fill: #4672ba; }
.park-name { fill: #30883a; }
.sight-name { fill: #238b9a; }
.poi-park { fill: #43ad4c; }
.poi-sight { fill: #19b5c8; }
.poi-station { fill: #2ab8ee; }
.poi-glyph { fill: #fff; }
.poi-ring { fill: none; stroke: #fff; stroke-width: 1px; }
.shield rect { fill: #3b76c4; }

.map-canvas .shield text {
  fill: #fff;
  stroke: none;
  font-weight: 700;
  font-size: 13px;
  text-anchor: middle;
}

.map-select {
  position: absolute;
  top: 0;
  left: 27%;
  width: 88px;
  height: 61px;
  background: rgba(234, 246, 232, .8);
  box-shadow: 0 2px 4px rgba(0, 0, 0, .25);
}

.map-select-arrow {
  display: flex;
  align-items: center;
  justify-content: center;
  width: 34px;
  height: 61px;
  padding-bottom: 12px;
  background: #fff;
  fill: #555;
}

.pin {
  position: absolute;
  width: 40px;
  height: 54px;
  fill: var(--blue);
}

.pin svg {
  display: block;
}

.pin-dot {
  fill: #e7e7e7;
}

.pin-west {
  top: 61%;
  left: 32.3%;
}

.pin-south {
  top: 87.2%;
  left: 58.4%;
}

.popup {
  position: absolute;
  top: 9.5%;
  left: 47.1%;
  width: 726px;
  padding: 35px 30px 50px 33px;
  border-radius: 6px;
  background: #fff;
  box-shadow: 0 8px 24px rgba(0, 0, 0, .3);
}

.popup::after {
  content: "";
  position: absolute;
  top: 100%;
  left: 257px;
  border: 16px solid transparent;
  border-top-color: #fff;
  border-bottom: 0;
}

.popup-title {
  display: flex;
  align-items: center;
  gap: 15px;
  font-weight: 900;
  font-size: 30px;
  line-height: 36px;
  white-space: nowrap;
}

.popup-radio {
  flex: none;
  width: 29px;
  height: 29px;
  margin: 6px 0 0;
  border: 2px solid #999;
  border-radius: 50%;
  appearance: none;
}

.popup-details {
  display: grid;
  grid-template-columns: 236px 1fr;
  row-gap: 29px;
  margin: 33px 0 0 45px;
}

.popup-details dt {
  font-weight: 700;
}

.days {
  display: flex;
  gap: 5px;
  margin: -3px 0 0 -7px;
}

.days li {
  width: 42px;
  height: 42px;
  border-radius: 50%;
  line-height: 42px;
  text-align: center;
}

.days .today {
  background: var(--blue);
  color: #fff;
}

.hours {
  margin-top: 7px;
}

.calendar {
  display: flex;
  align-items: center;
  gap: 10px;
  margin-top: 15px;
  color: var(--red);
  font-size: 23px;
  line-height: 30px;
  text-decoration: none;
}

/* Order */

.order-wrap {
  isolation: isolate;
}

.order {
  position: relative;
  padding: 44px 48px;
  border: 2px solid #eaf0f4;
  border-radius: 6px;
  background: var(--surface);
}

.order::before,
.order::after {
  content: "";
  position: absolute;
  z-index: -1;
  bottom: 14px;
  left: 10px;
  width: 48%;
  height: 20px;
  box-shadow: 0 16px 9px rgba(80, 80, 110, .8);
  transform: rotate(-3deg);
}

.order::after {
  right: 10px;
  left: auto;
  transform: rotate(3deg);
}

.order-title {
  font-weight: 900;
  font-size: 39px;
  line-height: 42px;
}

.order-list {
  display: grid;
  grid-template-columns: 238px 1fr;
  row-gap: 10px;
  margin-top: 20px;
}

.order-total {
  margin-top: 36px;
  font-size: 34px;
  line-height: 40px;
}

.rouble {
  font-family: "DejaVu Serif", serif;
  line-height: 1;
}

.actions {
  display: flex;
  justify-content: space-between;
  margin-top: 103px;
  padding: 33px;
  border-radius: 6px;
  background: #e6edf3;
}

.button-step {
  gap: 10px;
  width: 186px;
  height: 85px;
}

/* Footer */

.footer {
  padding: 49px var(--gutter) 38px;
  background: var(--blue);
  color: #fff;
}

.footer a {
  color: inherit;
}

.footer-grid {
  display: grid;
  grid-template-columns: 354px 267px 310px 240px 1fr auto;
  min-height: 370px;
  padding-right: 35px;
}

.footer .logo {
  margin-top: 5px;
}

.footer .logo-tagline {
  color: var(--blue);
}

.copyright {
  margin-top: 20px;
}

.social {
  margin-top: 15px;
}

.social .icon {
  display: inline-block;
  margin-left: 2px;
  vertical-align: -6px;
}

.footer-links {
  display: flex;
  flex-direction: column;
  gap: 22px;
}

.footer-links-loose {
  gap: 24px;
}

.footer-links a,
.legal-link {
  text-decoration-thickness: 2px;
  text-underline-offset: 3px;
}

.download,
.author {
  display: flex;
  align-items: center;
  align-self: start;
  text-decoration: none;
}

.download {
  gap: 9px;
  padding-bottom: 4px;
  font-size: 22px;
}

.author {
  gap: 11px;
  padding-top: 5px;
  font-size: 17px;
  line-height: 20px;
}

.author-logo {
  font: 700 44px/36px "Open Sans", sans-serif;
}

.legal {
  width: 1120px;
  max-width: 100%;
}

.legal-link {
  font-size: 22px;
  line-height: 28px;
}

.legal-note {
  margin-top: 10px;
  font-size: 17px;
  line-height: 22px;
}
```
